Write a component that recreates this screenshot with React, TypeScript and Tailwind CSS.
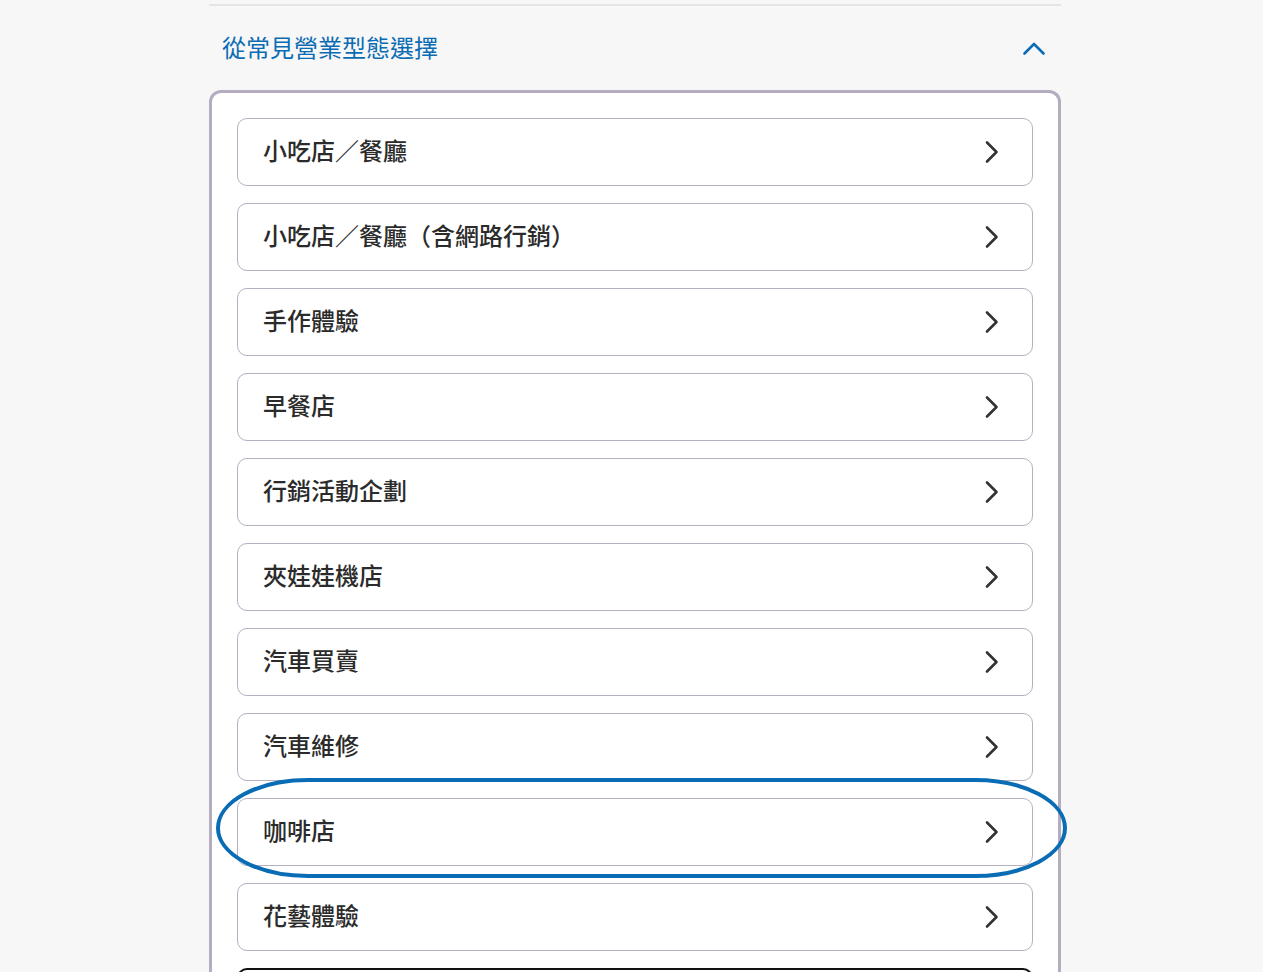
import React from "react";

const items = [
  "小吃店／餐廳",
  "小吃店／餐廳（含網路行銷）",
  "手作體驗",
  "早餐店",
  "行銷活動企劃",
  "夾娃娃機店",
  "汽車買賣",
  "汽車維修",
  "咖啡店",
  "花藝體驗",
];

function ChevronRight() {
  return (
    <svg width="14" height="24" viewBox="0 0 14 24" fill="none" className="shrink-0">
      <path d="M2 2.5 L11.5 12 L2 21.5" stroke="#333333" strokeWidth="2.6" strokeLinecap="round" strokeLinejoin="round" />
    </svg>
  );
}

export default function App() {
  return (
    <div
      className="h-[972px] w-full overflow-hidden bg-[#f7f7f7]"
      style={{ fontFamily: '"Noto Sans CJK TC", "Noto Sans", sans-serif' }}
    >
      <div className="ml-[209px] w-[852px] pt-[4px]">
        <div className="h-[2px] bg-[#e4e4e9]" />
        <div className="flex h-[84px] items-center justify-between pl-[13px] pr-[16px]">
          <span className="pb-[2px] text-[24px] leading-none text-[#0a6cb4]">從常見營業型態選擇</span>
          <svg width="22" height="13" viewBox="0 0 22 13" fill="none">
            <path d="M1.5 11.5 L11 2 L20.5 11.5" stroke="#0a6cb4" strokeWidth="2.6" strokeLinecap="round" strokeLinejoin="round" />
          </svg>
        </div>
        <div className="relative h-[900px] rounded-t-[12px] border-[3px] border-b-0 border-[#b4acbf] bg-white px-[25px] pt-[25px]">
          <div className="flex flex-col gap-[17px]">
            {items.map((t) => (
              <div
                key={t}
                className="flex h-[68px] items-center justify-between rounded-[10px] border border-[#b6afc1] bg-white pl-[25px] pr-[33px]"
              >
                <span className="pb-[4px] text-[24px] font-medium leading-none text-[#2b2b2b]">{t}</span>
                <ChevronRight />
              </div>
            ))}
            <div className="h-[68px] rounded-[10px] border-2 border-[#111111] bg-white" />
          </div>
          <svg
            className="pointer-events-none absolute left-[4px] top-[685px]"
            width="854"
            height="102"
            viewBox="0 0 854 102"
            fill="none"
          >
            <rect x="2" y="2" width="847" height="96" rx="90" ry="48" stroke="#0a6cb4" strokeWidth="4" />
          </svg>
        </div>
      </div>
    </div>
  );
}
